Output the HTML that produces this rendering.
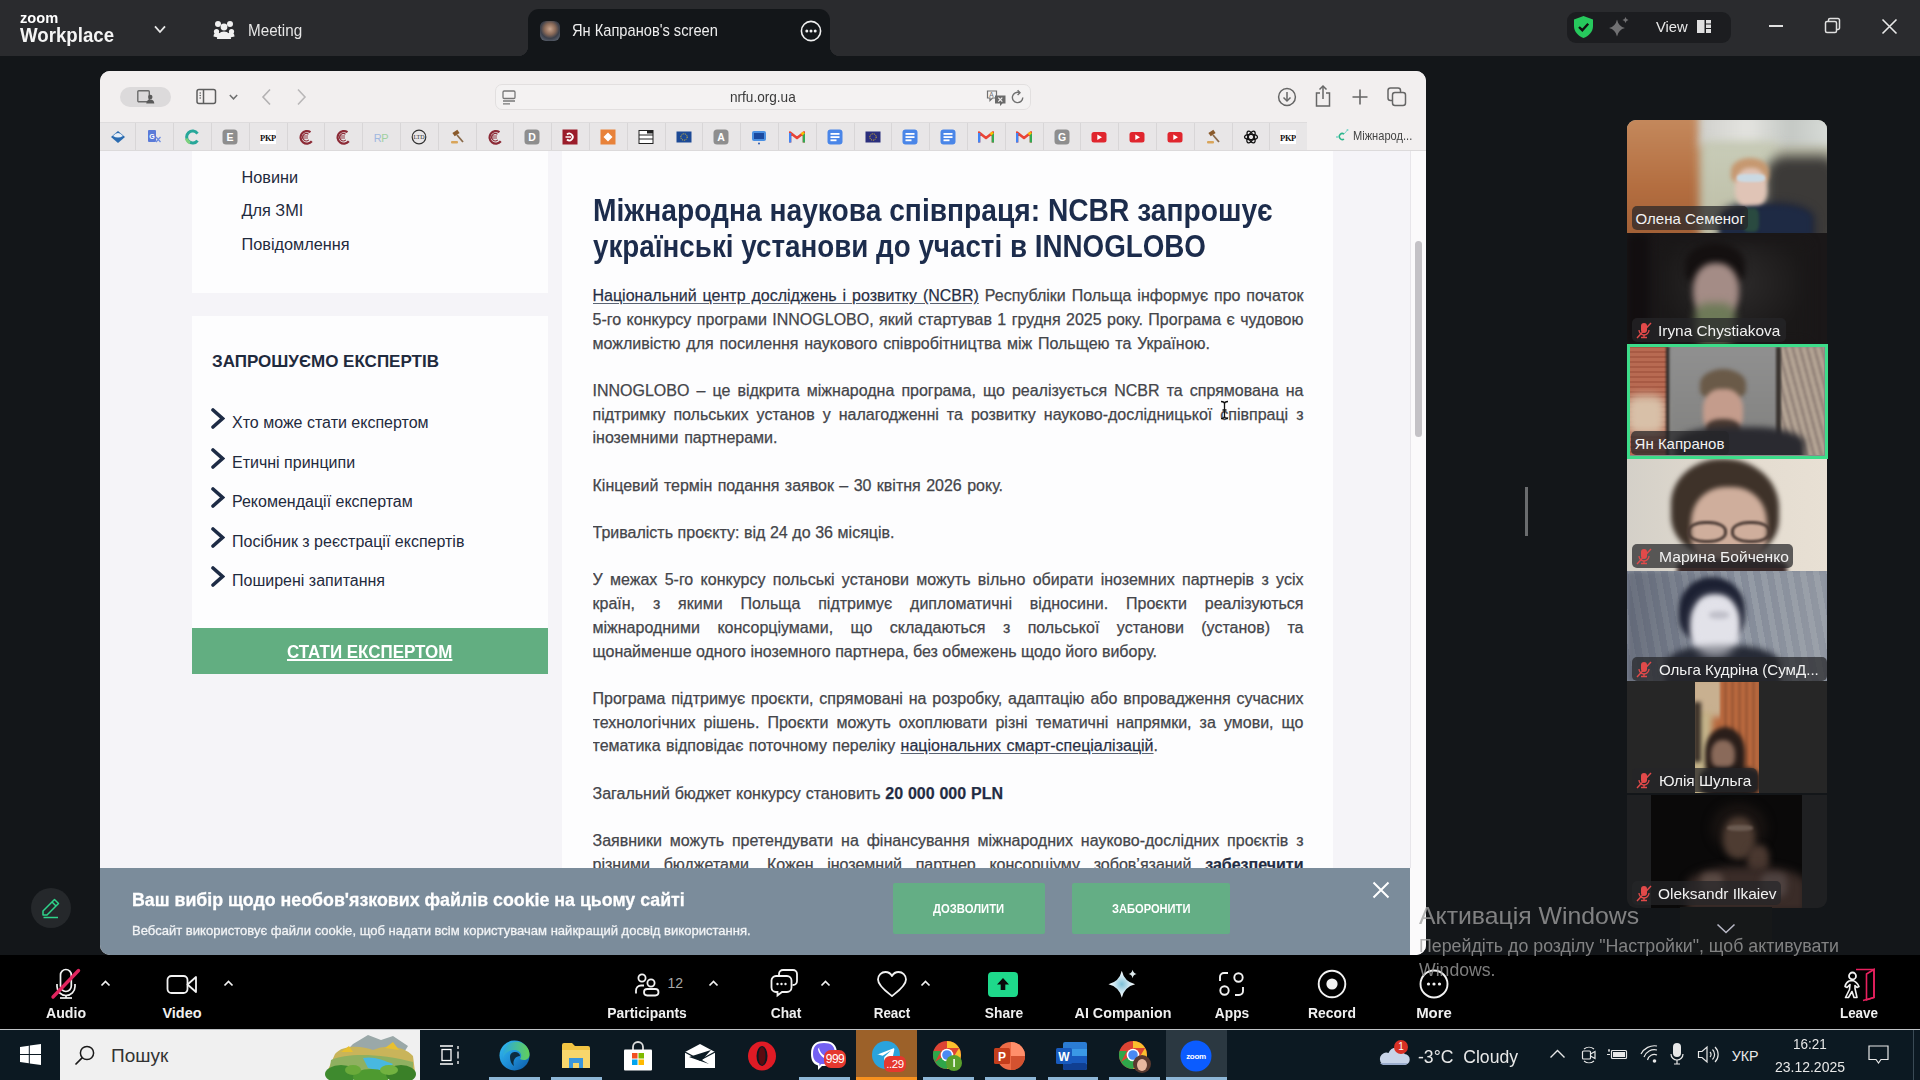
<!DOCTYPE html>
<html><head><meta charset="utf-8">
<style>
*{margin:0;padding:0;box-sizing:border-box}
html,body{width:1920px;height:1080px;overflow:hidden;background:#131619;font-family:"Liberation Sans",sans-serif}
.a{position:absolute}
#topbar{left:0;top:0;width:1920px;height:56px;background:#2a2b2e}
#tab{left:528px;top:9px;width:302px;height:47px;background:#131619;border-radius:11px 11px 0 0}
#browser{left:100px;top:71px;width:1326px;height:884px;background:#f5f4f8;border-radius:10px;overflow:hidden}
#tb{left:0;top:0;width:1326px;height:51px;background:#f2efef}
#bm{left:0;top:51px;width:1326px;height:29px;background:#f2efef;border-bottom:1px solid #dcdadb}
#page{left:0;top:80px;width:1326px;height:717px;background:#f5f4f8;overflow:hidden}
#cookie{left:0;top:797px;width:1310px;height:87px;background:#7b8c9b}
#zbar{left:0;top:955px;width:1920px;height:74px;background:#000}
#taskbar{left:0;top:1030px;width:1920px;height:50px;background:#0c1922}
.box{background:#fdfdfe}
.art{color:#44454a;font-size:16px;line-height:23.7px;-webkit-text-stroke:0.25px #44454a}
.ln{white-space:nowrap;height:23.7px}
.j{text-align:justify;text-align-last:justify;white-space:normal;width:711px;height:23.7px;overflow:hidden}
.art u{color:#1d2b45;text-decoration:underline;text-decoration-color:#5a6373;text-underline-offset:2px}
.art b{color:#1d2b45}
.side{font-size:16.3px;line-height:16.3px;color:#1f2a3d;white-space:nowrap}
.sideh{font-size:17px;line-height:17px;font-weight:bold;color:#1f2a3d;white-space:nowrap}
.items .it{position:absolute;left:0;height:20px;width:300px;font-size:16px;color:#1f2a3d;white-space:nowrap}
.items .it span{position:absolute;left:22px;top:0;line-height:16px}
.chev{position:absolute;left:0.7px;top:-7px;width:14px;height:21px}
.btnt{font-size:18.5px;line-height:18.5px;font-weight:bold;color:#fff;text-decoration:underline;white-space:nowrap}
.sx{display:inline-block;transform-origin:0 0;white-space:nowrap}
.title{font-size:31px;line-height:35.9px;font-weight:bold;color:#1c2c4c;white-space:nowrap}
.tl{height:35.9px}
#t1{transform:scaleX(0.909)}
#t2{transform:scaleX(0.896)}
.gap{height:23.7px}
.cbt{font-size:13.5px;line-height:13.5px;font-weight:bold;color:#fff;white-space:nowrap;transform-origin:0 0}
.zl{font-size:14.5px;line-height:14.5px;font-weight:bold;color:#f0f0f0;text-align:center;white-space:nowrap;transform-origin:50% 0}
.tile{overflow:hidden}
.lbl{height:24.4px;border-radius:5px;background:rgba(38,38,40,.72)}
.lt{font-size:15px;line-height:16px;color:#f2f2f2;white-space:nowrap;transform-origin:0 0}
</style></head><body>
<div id="topbar" class="a">
  <div class="a" id="zlogo" style="left:20px;top:9.8px;transform:scaleX(0.977);font-size:15px;line-height:15px;font-weight:bold;color:#fff;transform-origin:0 0">zoom</div>
  <div class="a" id="zwork" style="left:20.3px;top:25.1px;transform:scaleX(0.933);font-size:20px;line-height:20px;font-weight:bold;color:#f4f4f4;transform-origin:0 0">Workplace</div>
  <svg class="a" style="left:152px;top:23px" width="16" height="12" viewBox="0 0 16 12"><polyline points="3,3.3 8,9 13,3.3" fill="none" stroke="#e8e8e8" stroke-width="1.8"/></svg>
  <svg class="a" style="left:212px;top:18px" width="24" height="24" viewBox="0 0 24 24"><g fill="#f0f0f0"><circle cx="6" cy="6" r="3"/><circle cx="18" cy="6" r="3"/><circle cx="12" cy="9" r="3.4"/><circle cx="4.5" cy="13.5" r="2.6"/><circle cx="19.5" cy="13.5" r="2.6"/><path d="M5 21c0-4 3-7.5 7-7.5s7 3.5 7 7.5z"/><path d="M1.5 18.5c0-2.5 1.5-4 3.5-4s3 1 3 1l-2 4z"/><path d="M22.5 18.5c0-2.5-1.5-4-3.5-4s-3 1-3 1l2 4z"/></g></svg>
  <div class="a" id="zmeet" style="left:247.5px;top:21.8px;transform:scaleX(0.964);font-size:15.8px;line-height:18px;color:#e6e6e6;transform-origin:0 0">Meeting</div>
  <div class="a" style="left:1567px;top:12px;width:164px;height:31px;border-radius:9px;background:#1c1d20"></div>
  <svg class="a" style="left:1572px;top:15px" width="23" height="24" viewBox="0 0 23 24"><path d="M11.5 1 L21 4.5 V11 C21 17 16.5 21 11.5 23 C6.5 21 2 17 2 11 V4.5 Z" fill="#27c95d"/><polyline points="7,12 10.3,15.2 16.2,8.8" fill="none" stroke="#111" stroke-width="2.4"/></svg>
  <svg class="a" style="left:1608px;top:16px" width="23" height="22" viewBox="0 0 23 22"><path d="M9 3.5 Q10.5 10.5 17 12 Q10.5 13.5 9 20.5 Q7.5 13.5 1 12 Q7.5 10.5 9 3.5Z" fill="#707072"/><path d="M17.5 1 Q18 3.5 20.5 4 Q18 4.5 17.5 7 Q17 4.5 14.5 4 Q17 3.5 17.5 1Z" fill="#707072"/></svg>
  <div class="a" id="zview" style="left:1656px;top:17.5px;transform:scaleX(0.96);font-size:15.4px;line-height:18px;color:#e8e8e8;transform-origin:0 0">View</div>
  <svg class="a" style="left:1697px;top:19px" width="15" height="15" viewBox="0 0 15 15"><rect x="0" y="1" width="7.5" height="13" fill="#e0e0e0"/><rect x="9" y="1" width="5" height="3.5" fill="#e0e0e0"/><rect x="9" y="5.5" width="5" height="3.5" fill="#e0e0e0"/><rect x="9" y="10" width="5" height="4" fill="#e0e0e0"/></svg>
  <div class="a" style="left:1769px;top:25px;width:14px;height:1.6px;background:#e0e0e0"></div>
  <svg class="a" style="left:1824px;top:17px" width="18" height="18" viewBox="0 0 18 18"><rect x="1.5" y="4.5" width="11" height="11" rx="1.5" fill="none" stroke="#e0e0e0" stroke-width="1.5"/><path d="M4.5 4.5 V3 a1.5 1.5 0 0 1 1.5 -1.5 H14 a1.5 1.5 0 0 1 1.5 1.5 V11 a1.5 1.5 0 0 1 -1.5 1.5 H12.5" fill="none" stroke="#e0e0e0" stroke-width="1.5"/></svg>
  <svg class="a" style="left:1881px;top:18px" width="17" height="17" viewBox="0 0 17 17"><path d="M1.5 1.5 L15.5 15.5 M15.5 1.5 L1.5 15.5" stroke="#e8e8e8" stroke-width="1.6"/></svg>
</div>
<div id="tab" class="a">
  <div class="a" style="left:-10px;top:37px;width:10px;height:10px;background:radial-gradient(circle at 0 0,#2a2b2e 10px,#131619 10.5px)"></div>
  <div class="a" style="left:302px;top:37px;width:10px;height:10px;background:radial-gradient(circle at 100% 0,#2a2b2e 10px,#131619 10.5px)"></div>
  <div class="a" style="left:12px;top:12px;width:20px;height:20px;border-radius:6px;background:radial-gradient(circle at 50% 40%,#c9a48c 0,#8a6a58 35%,#3b3f4a 60%,#6c7480 100%)"></div>
  <div class="a" id="ztab" style="left:44px;top:13.2px;transform:scaleX(0.873);font-size:16.8px;line-height:18px;color:#eeeeee;transform-origin:0 0">Ян Капранов's screen</div>
  <svg class="a" style="left:272px;top:11px" width="22" height="22" viewBox="0 0 22 22"><circle cx="11" cy="11" r="9.6" fill="none" stroke="#f0f0f0" stroke-width="1.6"/><circle cx="6.8" cy="11" r="1.5" fill="#f0f0f0"/><circle cx="11" cy="11" r="1.5" fill="#f0f0f0"/><circle cx="15.2" cy="11" r="1.5" fill="#f0f0f0"/></svg>
</div>

<div id="browser" class="a">
  <div id="tb" class="a">
    <div class="a" style="left:20px;top:16px;width:51px;height:20px;border-radius:10px;background:#dcdadb"></div>
    <svg class="a" style="left:37px;top:18px" width="18" height="16" viewBox="0 0 18 16"><rect x="0.8" y="1.8" width="11.5" height="11" rx="1" fill="none" stroke="#6b6b6b" stroke-width="1.4"/><circle cx="13.3" cy="8" r="2.2" fill="#5a5a5a"/><path d="M9.3 14.6 c0-2.6 1.8-4 4-4 s4 1.4 4 4z" fill="#5a5a5a"/></svg>
    <svg class="a" style="left:96px;top:17px" width="21" height="17" viewBox="0 0 21 17"><rect x="1" y="1.5" width="18.5" height="14" rx="2" fill="none" stroke="#5e5e5e" stroke-width="1.5"/><line x1="7.5" y1="1.5" x2="7.5" y2="15.5" stroke="#5e5e5e" stroke-width="1.5"/><circle cx="4.2" cy="5" r=".8" fill="#5e5e5e"/><circle cx="4.2" cy="7.5" r=".8" fill="#5e5e5e"/><circle cx="4.2" cy="10" r=".8" fill="#5e5e5e"/></svg>
    <svg class="a" style="left:128px;top:22px" width="11" height="8" viewBox="0 0 11 8"><polyline points="1.8,2 5.5,5.8 9.2,2" fill="none" stroke="#707070" stroke-width="1.5"/></svg>
    <svg class="a" style="left:160px;top:17px" width="13" height="18" viewBox="0 0 13 18"><polyline points="10,1.5 3,9 10,16.5" fill="none" stroke="#b3b1b2" stroke-width="1.6"/></svg>
    <svg class="a" style="left:195px;top:17px" width="13" height="18" viewBox="0 0 13 18"><polyline points="3,1.5 10,9 3,16.5" fill="none" stroke="#b9b7b8" stroke-width="1.6"/></svg>
    <div class="a" style="left:394.5px;top:12.5px;width:536px;height:26px;border-radius:7px;background:#f4f2f2;border:1px solid #e2dfdf"></div>
    <svg class="a" style="left:402px;top:19px" width="14" height="15" viewBox="0 0 14 15"><rect x="1" y="1" width="12" height="7.5" rx="1.2" fill="none" stroke="#777" stroke-width="1.3"/><line x1="1" y1="11" x2="13" y2="11" stroke="#777" stroke-width="1.3"/><line x1="1" y1="13.8" x2="8" y2="13.8" stroke="#777" stroke-width="1.3"/></svg>
    <div class="a" id="url" style="left:630px;top:18.4px;transform:scaleX(0.906);transform-origin:0 0;font-size:15px;line-height:16px;color:#3a3a3a">nrfu.org.ua</div>
    <svg class="a" style="left:886px;top:18px" width="21" height="17" viewBox="0 0 21 17"><path d="M1.5 2 h9 v7 h-4 l-2.5 2.5 v-2.5 h-2.5z" fill="none" stroke="#707070" stroke-width="1.2"/><text x="3.2" y="8" font-size="6.5" font-family="Liberation Sans" fill="#707070">A</text><path d="M9 6.5 h10.5 v8 h-3 l-2.5 2.5 v-2.5 h-5z" fill="#6a6a6a"/><path d="M12.3 8.7 l4 4 M16.3 8.7 l-4 4" stroke="#f4f2f2" stroke-width="1.2"/></svg>
    <svg class="a" style="left:911px;top:18px" width="14" height="16" viewBox="0 0 14 16"><path d="M11.8 8.5 A5.2 5.2 0 1 1 8.5 3.6" fill="none" stroke="#707070" stroke-width="1.4"/><polyline points="6.6,1.2 9,3.7 6.6,6" fill="none" stroke="#707070" stroke-width="1.4"/></svg>
    <svg class="a" style="left:1177px;top:16px" width="20" height="20" viewBox="0 0 20 20"><circle cx="10" cy="10" r="8.4" fill="none" stroke="#666" stroke-width="1.5"/><line x1="10" y1="5" x2="10" y2="14" stroke="#666" stroke-width="1.5"/><polyline points="6.5,10.5 10,14 13.5,10.5" fill="none" stroke="#666" stroke-width="1.5"/></svg>
    <svg class="a" style="left:1214px;top:13px" width="18" height="24" viewBox="0 0 18 24"><path d="M6 9 H2.5 v13 h13 V9 H12" fill="none" stroke="#666" stroke-width="1.5"/><line x1="9" y1="2" x2="9" y2="15" stroke="#666" stroke-width="1.5"/><polyline points="5.5,5.5 9,2 12.5,5.5" fill="none" stroke="#666" stroke-width="1.5"/></svg>
    <svg class="a" style="left:1251px;top:17px" width="18" height="18" viewBox="0 0 18 18"><path d="M9 1.5 V16.5 M1.5 9 H16.5" stroke="#666" stroke-width="1.6"/></svg>
    <svg class="a" style="left:1287px;top:16px" width="20" height="20" viewBox="0 0 20 20"><rect x="1" y="1" width="12.5" height="12.5" rx="2.5" fill="none" stroke="#666" stroke-width="1.5"/><rect x="5.5" y="5.5" width="13" height="13" rx="2.5" fill="#f2efef" stroke="#666" stroke-width="1.5"/></svg>
  </div>
  <div id="bm" class="a">
<div class="a" style="left:0;top:0;width:1207.3px;height:28px;background:#e8e6e7;border-top:1px solid #dedcdd"></div>
<div class="a" style="left:35.4px;top:1px;width:1px;height:27px;background:#d8d6d7"></div>
<div class="a" style="left:73.2px;top:1px;width:1px;height:27px;background:#d8d6d7"></div>
<div class="a" style="left:111.0px;top:1px;width:1px;height:27px;background:#d8d6d7"></div>
<div class="a" style="left:148.8px;top:1px;width:1px;height:27px;background:#d8d6d7"></div>
<div class="a" style="left:186.6px;top:1px;width:1px;height:27px;background:#d8d6d7"></div>
<div class="a" style="left:224.4px;top:1px;width:1px;height:27px;background:#d8d6d7"></div>
<div class="a" style="left:262.2px;top:1px;width:1px;height:27px;background:#d8d6d7"></div>
<div class="a" style="left:300.0px;top:1px;width:1px;height:27px;background:#d8d6d7"></div>
<div class="a" style="left:337.8px;top:1px;width:1px;height:27px;background:#d8d6d7"></div>
<div class="a" style="left:375.6px;top:1px;width:1px;height:27px;background:#d8d6d7"></div>
<div class="a" style="left:413.4px;top:1px;width:1px;height:27px;background:#d8d6d7"></div>
<div class="a" style="left:451.2px;top:1px;width:1px;height:27px;background:#d8d6d7"></div>
<div class="a" style="left:489.0px;top:1px;width:1px;height:27px;background:#d8d6d7"></div>
<div class="a" style="left:526.8px;top:1px;width:1px;height:27px;background:#d8d6d7"></div>
<div class="a" style="left:564.6px;top:1px;width:1px;height:27px;background:#d8d6d7"></div>
<div class="a" style="left:602.4px;top:1px;width:1px;height:27px;background:#d8d6d7"></div>
<div class="a" style="left:640.2px;top:1px;width:1px;height:27px;background:#d8d6d7"></div>
<div class="a" style="left:678.0px;top:1px;width:1px;height:27px;background:#d8d6d7"></div>
<div class="a" style="left:715.8px;top:1px;width:1px;height:27px;background:#d8d6d7"></div>
<div class="a" style="left:753.6px;top:1px;width:1px;height:27px;background:#d8d6d7"></div>
<div class="a" style="left:791.4px;top:1px;width:1px;height:27px;background:#d8d6d7"></div>
<div class="a" style="left:829.2px;top:1px;width:1px;height:27px;background:#d8d6d7"></div>
<div class="a" style="left:867.0px;top:1px;width:1px;height:27px;background:#d8d6d7"></div>
<div class="a" style="left:904.8px;top:1px;width:1px;height:27px;background:#d8d6d7"></div>
<div class="a" style="left:942.6px;top:1px;width:1px;height:27px;background:#d8d6d7"></div>
<div class="a" style="left:980.4px;top:1px;width:1px;height:27px;background:#d8d6d7"></div>
<div class="a" style="left:1018.2px;top:1px;width:1px;height:27px;background:#d8d6d7"></div>
<div class="a" style="left:1056.0px;top:1px;width:1px;height:27px;background:#d8d6d7"></div>
<div class="a" style="left:1093.8px;top:1px;width:1px;height:27px;background:#d8d6d7"></div>
<div class="a" style="left:1131.6px;top:1px;width:1px;height:27px;background:#d8d6d7"></div>
<div class="a" style="left:1169.4px;top:1px;width:1px;height:27px;background:#d8d6d7"></div>
<svg class="a" style="left:9.7px;top:7px" width="16" height="16" viewBox="0 0 16 16"><path d="M8 2 L15 8 L8 14 L1 8z" fill="#2a6bb0"/><path d="M3 7 Q8 1 13 7 Q8 10 3 7z" fill="#e8f0f8"/></svg>
<svg class="a" style="left:46.3px;top:7px" width="16" height="16" viewBox="0 0 16 16"><rect x="2" y="1" width="8" height="12" rx="1" fill="#5b7bd8"/><text x="6" y="10" font-size="7" font-weight="bold" text-anchor="middle" font-family="Liberation Sans" fill="#fff">G</text><path d="M10 8 L14.5 13 M14.5 8 L10 13" stroke="#6b8be0" stroke-width="1.2"/></svg>
<svg class="a" style="left:84.1px;top:7px" width="16" height="16" viewBox="0 0 16 16"><path d="M13.5 4.5 A6 6 0 1 0 13.5 11.5" fill="none" stroke="#27a79a" stroke-width="3"/><path d="M2.5 9.5 A6 6 0 0 0 6 13.8" fill="none" stroke="#7dd17d" stroke-width="3"/></svg>
<svg class="a" style="left:121.9px;top:7px" width="16" height="16" viewBox="0 0 16 16"><rect x="0.5" y="0.5" width="15" height="15" rx="3.5" fill="#8e8e8e"/><text x="8" y="12.3" font-size="10.5" font-weight="bold" text-anchor="middle" font-family="Liberation Sans" fill="#fff">E</text></svg>
<svg class="a" style="left:159.7px;top:7px" width="16" height="16" viewBox="0 0 16 16"><rect x="0" y="1" width="16" height="14" fill="#fff"/><text x="8" y="11.6" font-size="8.5" font-weight="bold" text-anchor="middle" font-family="Liberation Serif" fill="#111" letter-spacing="-0.4">PKP</text></svg>
<svg class="a" style="left:197.5px;top:7px" width="16" height="16" viewBox="0 0 16 16"><path d="M12.5 3.2 A6.3 6.3 0 1 0 13.8 12.3" fill="none" stroke="#8c2a36" stroke-width="2.2"/><path d="M10.5 5.3 A3.6 3.6 0 1 0 10.8 10.8" fill="none" stroke="#8c2a36" stroke-width="1.1"/><line x1="4" y1="7" x2="10" y2="7" stroke="#8c2a36" stroke-width="0.9"/><line x1="4" y1="9" x2="10" y2="9" stroke="#8c2a36" stroke-width="0.9"/></svg>
<svg class="a" style="left:235.3px;top:7px" width="16" height="16" viewBox="0 0 16 16"><path d="M12.5 3.2 A6.3 6.3 0 1 0 13.8 12.3" fill="none" stroke="#8c2a36" stroke-width="2.2"/><path d="M10.5 5.3 A3.6 3.6 0 1 0 10.8 10.8" fill="none" stroke="#8c2a36" stroke-width="1.1"/><line x1="4" y1="7" x2="10" y2="7" stroke="#8c2a36" stroke-width="0.9"/><line x1="4" y1="9" x2="10" y2="9" stroke="#8c2a36" stroke-width="0.9"/></svg>
<svg class="a" style="left:273.1px;top:7px" width="16" height="16" viewBox="0 0 16 16"><text x="8" y="12.5" font-size="11" text-anchor="middle" font-family="Liberation Sans" fill="#9fb8e0" letter-spacing="-0.5">R<tspan fill="#a0d0a0">P</tspan></text></svg>
<svg class="a" style="left:310.9px;top:7px" width="16" height="16" viewBox="0 0 16 16"><circle cx="8" cy="8" r="6.8" fill="none" stroke="#333" stroke-width="1.2"/><text x="8" y="10.3" font-size="6" text-anchor="middle" font-family="Liberation Serif" fill="#333">LTD</text></svg>
<svg class="a" style="left:348.7px;top:7px" width="16" height="16" viewBox="0 0 16 16"><rect x="4" y="2" width="6" height="4" transform="rotate(-35 7 4)" fill="#8a5a2b"/><line x1="8" y1="6" x2="14" y2="13" stroke="#8a6a4a" stroke-width="1.8"/><rect x="2" y="12" width="7" height="2.5" rx="1" fill="#d9a55a"/></svg>
<svg class="a" style="left:386.5px;top:7px" width="16" height="16" viewBox="0 0 16 16"><path d="M12.5 3.2 A6.3 6.3 0 1 0 13.8 12.3" fill="none" stroke="#8c2a36" stroke-width="2.2"/><path d="M10.5 5.3 A3.6 3.6 0 1 0 10.8 10.8" fill="none" stroke="#8c2a36" stroke-width="1.1"/><line x1="4" y1="7" x2="10" y2="7" stroke="#8c2a36" stroke-width="0.9"/><line x1="4" y1="9" x2="10" y2="9" stroke="#8c2a36" stroke-width="0.9"/></svg>
<svg class="a" style="left:424.3px;top:7px" width="16" height="16" viewBox="0 0 16 16"><rect x="0.5" y="0.5" width="15" height="15" rx="3.5" fill="#8e8e8e"/><text x="8" y="12.3" font-size="10.5" font-weight="bold" text-anchor="middle" font-family="Liberation Sans" fill="#fff">D</text></svg>
<svg class="a" style="left:462.1px;top:7px" width="16" height="16" viewBox="0 0 16 16"><rect x="0.5" y="0.5" width="15" height="15" fill="#9b1c2a"/><path d="M5 5.5 A3.4 3.4 0 1 1 5 10.5" fill="none" stroke="#fff" stroke-width="1.8"/><line x1="3.5" y1="8" x2="9" y2="8" stroke="#fff" stroke-width="1.6"/></svg>
<svg class="a" style="left:499.9px;top:7px" width="16" height="16" viewBox="0 0 16 16"><rect x="0.5" y="0.5" width="15" height="15" fill="#e8823a"/><path d="M8 3.5 L12.5 8 L8 12.5 L3.5 8z" fill="#fff"/></svg>
<svg class="a" style="left:537.7px;top:7px" width="16" height="16" viewBox="0 0 16 16"><rect x="1" y="1.5" width="14" height="13" fill="#fff" stroke="#222" stroke-width="1"/><rect x="9" y="1.5" width="6" height="3" fill="#222"/><line x1="1" y1="6" x2="15" y2="6" stroke="#222" stroke-width="1"/><line x1="1" y1="10" x2="15" y2="10" stroke="#222" stroke-width="1"/></svg>
<svg class="a" style="left:575.5px;top:7px" width="16" height="16" viewBox="0 0 16 16"><rect x="0.5" y="2.5" width="15" height="11" fill="#1d4a96"/><circle cx="8" cy="8" r="3.2" fill="none" stroke="#ffd21f" stroke-width="0.9" stroke-dasharray="1 1"/></svg>
<svg class="a" style="left:613.3px;top:7px" width="16" height="16" viewBox="0 0 16 16"><rect x="0.5" y="0.5" width="15" height="15" rx="3.5" fill="#8e8e8e"/><text x="8" y="12.3" font-size="10.5" font-weight="bold" text-anchor="middle" font-family="Liberation Sans" fill="#fff">A</text></svg>
<svg class="a" style="left:651.1px;top:7px" width="16" height="16" viewBox="0 0 16 16"><rect x="1" y="2" width="14" height="10" rx="2" fill="#4a90e2"/><rect x="3" y="4" width="10" height="6" fill="#1a4aa0"/><circle cx="8" cy="14.5" r="1" fill="#2a5ab0"/></svg>
<svg class="a" style="left:688.9px;top:7px" width="16" height="16" viewBox="0 0 16 16"><path d="M1 13.5 V3.5 L8 9 L15 3.5 V13.5" fill="none" stroke="#ea4335" stroke-width="2.6" stroke-linejoin="round"/><path d="M1 13.5 V4" stroke="#4285f4" stroke-width="2.6"/><path d="M15 13.5 V4" stroke="#34a853" stroke-width="2.6"/><path d="M12.5 5.4 L15 3.5" stroke="#fbbc04" stroke-width="2.6"/></svg>
<svg class="a" style="left:726.7px;top:7px" width="16" height="16" viewBox="0 0 16 16"><rect x="0.5" y="0.5" width="15" height="15" rx="3" fill="#4a86e8"/><rect x="3.5" y="4" width="9" height="1.8" fill="#fff"/><rect x="3.5" y="7.2" width="9" height="1.8" fill="#fff"/><rect x="3.5" y="10.4" width="6" height="1.8" fill="#fff"/></svg>
<svg class="a" style="left:764.5px;top:7px" width="16" height="16" viewBox="0 0 16 16"><rect x="0.5" y="2.5" width="15" height="11" fill="#2b2f7d"/><circle cx="8" cy="8" r="3.2" fill="none" stroke="#ffd21f" stroke-width="0.9" stroke-dasharray="1 1"/></svg>
<svg class="a" style="left:802.3px;top:7px" width="16" height="16" viewBox="0 0 16 16"><rect x="0.5" y="0.5" width="15" height="15" rx="3" fill="#4a86e8"/><rect x="3.5" y="4" width="9" height="1.8" fill="#fff"/><rect x="3.5" y="7.2" width="9" height="1.8" fill="#fff"/><rect x="3.5" y="10.4" width="6" height="1.8" fill="#fff"/></svg>
<svg class="a" style="left:840.1px;top:7px" width="16" height="16" viewBox="0 0 16 16"><rect x="0.5" y="0.5" width="15" height="15" rx="3" fill="#4a86e8"/><rect x="3.5" y="4" width="9" height="1.8" fill="#fff"/><rect x="3.5" y="7.2" width="9" height="1.8" fill="#fff"/><rect x="3.5" y="10.4" width="6" height="1.8" fill="#fff"/></svg>
<svg class="a" style="left:877.9px;top:7px" width="16" height="16" viewBox="0 0 16 16"><path d="M1 13.5 V3.5 L8 9 L15 3.5 V13.5" fill="none" stroke="#ea4335" stroke-width="2.6" stroke-linejoin="round"/><path d="M1 13.5 V4" stroke="#4285f4" stroke-width="2.6"/><path d="M15 13.5 V4" stroke="#34a853" stroke-width="2.6"/><path d="M12.5 5.4 L15 3.5" stroke="#fbbc04" stroke-width="2.6"/></svg>
<svg class="a" style="left:915.7px;top:7px" width="16" height="16" viewBox="0 0 16 16"><path d="M1 13.5 V3.5 L8 9 L15 3.5 V13.5" fill="none" stroke="#ea4335" stroke-width="2.6" stroke-linejoin="round"/><path d="M1 13.5 V4" stroke="#4285f4" stroke-width="2.6"/><path d="M15 13.5 V4" stroke="#34a853" stroke-width="2.6"/><path d="M12.5 5.4 L15 3.5" stroke="#fbbc04" stroke-width="2.6"/></svg>
<svg class="a" style="left:953.5px;top:7px" width="16" height="16" viewBox="0 0 16 16"><rect x="0.5" y="0.5" width="15" height="15" rx="3.5" fill="#8e8e8e"/><text x="8" y="12.3" font-size="10.5" font-weight="bold" text-anchor="middle" font-family="Liberation Sans" fill="#fff">G</text></svg>
<svg class="a" style="left:991.3px;top:7px" width="16" height="16" viewBox="0 0 16 16"><rect x="0.5" y="3" width="15" height="10.5" rx="2.5" fill="#e0262e"/><path d="M6.3 5.6 L11 8.25 L6.3 10.9z" fill="#fff"/></svg>
<svg class="a" style="left:1029.1px;top:7px" width="16" height="16" viewBox="0 0 16 16"><rect x="0.5" y="3" width="15" height="10.5" rx="2.5" fill="#e0262e"/><path d="M6.3 5.6 L11 8.25 L6.3 10.9z" fill="#fff"/></svg>
<svg class="a" style="left:1066.9px;top:7px" width="16" height="16" viewBox="0 0 16 16"><rect x="0.5" y="3" width="15" height="10.5" rx="2.5" fill="#e0262e"/><path d="M6.3 5.6 L11 8.25 L6.3 10.9z" fill="#fff"/></svg>
<svg class="a" style="left:1104.7px;top:7px" width="16" height="16" viewBox="0 0 16 16"><rect x="4" y="2" width="6" height="4" transform="rotate(-35 7 4)" fill="#8a5a2b"/><line x1="8" y1="6" x2="14" y2="13" stroke="#8a6a4a" stroke-width="1.8"/><rect x="2" y="12" width="7" height="2.5" rx="1" fill="#d9a55a"/></svg>
<svg class="a" style="left:1142.5px;top:7px" width="16" height="16" viewBox="0 0 16 16"><g fill="none" stroke="#111" stroke-width="1.3"><ellipse cx="8" cy="8" rx="6.5" ry="2.7"/><ellipse cx="8" cy="8" rx="6.5" ry="2.7" transform="rotate(60 8 8)"/><ellipse cx="8" cy="8" rx="6.5" ry="2.7" transform="rotate(120 8 8)"/></g></svg>
<svg class="a" style="left:1180.3px;top:7px" width="16" height="16" viewBox="0 0 16 16"><rect x="0" y="1" width="16" height="14" fill="#fff"/><text x="8" y="11.6" font-size="8.5" font-weight="bold" text-anchor="middle" font-family="Liberation Serif" fill="#111" letter-spacing="-0.4">PKP</text></svg>
<svg class="a" style="left:1235px;top:6px" width="14" height="14" viewBox="0 0 14 14"><circle cx="2" cy="9" r="1" fill="#7bd4c8"/><path d="M9 6 A3 3 0 1 0 9 11" fill="none" stroke="#2bb58a" stroke-width="1.5"/><line x1="9" y1="6" x2="12.5" y2="2" stroke="#7bd4c8" stroke-width="1"/><circle cx="12.5" cy="2" r="1" fill="#7bd4c8"/></svg>
<div class="a" id="mizh" style="left:1252.8px;top:7px;transform:scaleX(0.853);transform-origin:0 0;font-size:13px;line-height:14px;color:#444">Міжнарод...</div>
</div>
  <div id="page" class="a">
    <div class="a box" style="left:92px;top:-20px;width:356px;height:162px"></div>
    <div class="a side" style="left:141.5px;top:17.5px">Новини</div>
    <div class="a side" style="left:141.5px;top:51px">Для ЗМІ</div>
    <div class="a side" style="left:141.5px;top:84.5px">Повідомлення</div>
    <div class="a box" style="left:92px;top:165px;width:356px;height:312px"></div>
    <div class="a sideh" style="left:112px;top:201.6px">ЗАПРОШУЄМО ЕКСПЕРТІВ</div>
    <div class="a items" style="left:110px;top:0px">
      <div class="it" style="top:264px"><svg class="chev" viewBox="0 0 14 21"><polyline points="2,2 11.5,10.5 2,19" fill="none" stroke="#1d2b45" stroke-width="3.6" stroke-linecap="round" stroke-linejoin="miter"/></svg><span>Хто може стати експертом</span></div>
      <div class="it" style="top:303.5px"><svg class="chev" viewBox="0 0 14 21"><polyline points="2,2 11.5,10.5 2,19" fill="none" stroke="#1d2b45" stroke-width="3.6" stroke-linecap="round"/></svg><span>Етичні принципи</span></div>
      <div class="it" style="top:343px"><svg class="chev" viewBox="0 0 14 21"><polyline points="2,2 11.5,10.5 2,19" fill="none" stroke="#1d2b45" stroke-width="3.6" stroke-linecap="round"/></svg><span>Рекомендації експертам</span></div>
      <div class="it" style="top:382.5px"><svg class="chev" viewBox="0 0 14 21"><polyline points="2,2 11.5,10.5 2,19" fill="none" stroke="#1d2b45" stroke-width="3.6" stroke-linecap="round"/></svg><span>Посібник з реєстрації експертів</span></div>
      <div class="it" style="top:422px"><svg class="chev" viewBox="0 0 14 21"><polyline points="2,2 11.5,10.5 2,19" fill="none" stroke="#1d2b45" stroke-width="3.6" stroke-linecap="round"/></svg><span>Поширені запитання</span></div>
    </div>
    <div class="a" style="left:92px;top:477px;width:356px;height:46px;background:#62ae81"></div>
    <div class="a btnt" style="left:187px;top:491.6px"><span class="sx" style="transform:scaleX(0.917);text-decoration:underline;text-decoration-thickness:1.5px;text-underline-offset:1px">СТАТИ ЕКСПЕРТОМ</span></div>
    <div class="a box" style="left:462px;top:-20px;width:771px;height:760px"></div>
    <div class="a title" style="left:492.8px;top:42.2px">
      <div class="tl"><span class="sx" id="t1">Міжнародна наукова співпраця: NCBR запрошує</span></div>
      <div class="tl"><span class="sx" id="t2">українські установи до участі в INNOGLOBO</span></div>
    </div>
    <div class="a art" style="left:492.5px;top:133.2px">
      <div class="j"><u>Національний центр досліджень і розвитку (NCBR)</u> Республіки Польща інформує про початок</div>
      <div class="j">5-го конкурсу програми INNOGLOBO, який стартував 1 грудня 2025 року. Програма є чудовою</div>
      <div class="j" style="width:617.5px">можливістю для посилення наукового співробітництва між Польщею та Україною.</div>
      <div class="gap"></div>
      <div class="j">INNOGLOBO – це відкрита міжнародна програма, що реалізується NCBR та спрямована на</div>
      <div class="j">підтримку польських установ у налагодженні та розвитку науково-дослідницької співпраці з</div>
      <div class="j" style="width:185px">іноземними партнерами.</div>
      <div class="gap"></div>
      <div class="j" style="width:410.5px">Кінцевий термін подання заявок – 30 квітня 2026 року.</div>
      <div class="gap"></div>
      <div class="j" style="width:302px">Тривалість проєкту: від 24 до 36 місяців.</div>
      <div class="gap"></div>
      <div class="j">У межах 5-го конкурсу польські установи можуть вільно обирати іноземних партнерів з усіх</div>
      <div class="j">країн, з якими Польща підтримує дипломатичні відносини. Проєкти реалізуються</div>
      <div class="j">міжнародними консорціумами, що складаються з польської установи (установ) та</div>
      <div class="j" style="width:564.5px">щонайменше одного іноземного партнера, без обмежень щодо його вибору.</div>
      <div class="gap"></div>
      <div class="j">Програма підтримує проєкти, спрямовані на розробку, адаптацію або впровадження сучасних</div>
      <div class="j">технологічних рішень. Проєкти можуть охоплювати різні тематичні напрямки, за умови, що</div>
      <div class="j" style="width:565.5px">тематика відповідає поточному переліку <u>національних смарт-спеціалізацій</u>.</div>
      <div class="gap"></div>
      <div class="j" style="width:410.5px">Загальний бюджет конкурсу становить <b>20 000 000 PLN</b></div>
      <div class="gap"></div>
      <div class="j">Заявники можуть претендувати на фінансування міжнародних науково-дослідних проєктів з</div>
      <div class="j">різними бюджетами. Кожен іноземний партнер консорціуму зобов’язаний <b>забезпечити</b></div>
    </div>
  </div>
  <div id="cookie" class="a">
    <div class="a" id="ck1" style="left:32.3px;top:21.5px;transform:scaleX(0.936);font-size:19px;line-height:19px;font-weight:bold;color:#fff;-webkit-text-stroke:0.3px #fff;white-space:nowrap;transform-origin:0 0">Ваш вибір щодо необов'язкових файлів cookie на цьому сайті</div>
    <div class="a" id="ck2" style="left:32.3px;top:56.2px;transform:scaleX(0.967);font-size:13.5px;line-height:13.5px;color:#f2f4f6;-webkit-text-stroke:0.3px #f2f4f6;white-space:nowrap;transform-origin:0 0">Вебсайт використовує файли cookie, щоб надати всім користувачам найкращий досвід використання.</div>
    <div class="a" style="left:792.7px;top:15px;width:152px;height:51px;background:#64ae85;border-radius:2px"></div>
    <div class="a" style="left:972px;top:15px;width:158px;height:51px;background:#64ae85;border-radius:2px"></div>
    <div class="a cbt" id="cb1" style="left:832.6px;top:34px;transform:scaleX(0.834)">ДОЗВОЛИТИ</div>
    <div class="a cbt" id="cb2" style="left:1012.3px;top:34px;transform:scaleX(0.824)">ЗАБОРОНИТИ</div>
    <svg class="a" style="left:1271.5px;top:13px" width="18" height="18" viewBox="0 0 18 18"><path d="M1.5 1.5 L16.5 16.5 M16.5 1.5 L1.5 16.5" stroke="#fff" stroke-width="2"/></svg>
  </div>
  <div class="a" style="left:1310px;top:80px;width:16px;height:804px;background:#fbfafb"></div>
  <div class="a" style="left:1310px;top:80px;width:1px;height:717px;background:#e8e6ea"></div>
  <div class="a" style="left:1314.5px;top:170px;width:7px;height:196px;border-radius:3.5px;background:#c4c2c6"></div>
</div>

<!--PANEL-->
<div class="a tile" style="left:1627px;top:120px;width:200px;height:113px;border-radius:9px 9px 0 0;background:#b8b8a4">
<div class="a" style="left:-10px;top:-10px;width:86px;height:140px;background:linear-gradient(180deg,#c68c60,#b46e40 55%,#9c5c34);border-radius:0;filter:blur(4px);"></div>
<div class="a" style="left:72px;top:-8px;width:140px;height:34px;background:linear-gradient(90deg,#d0d0cc,#e4e4e0 35%,#c4c8c4 65%,#dce0dc);border-radius:0;filter:blur(5px);"></div>
<div class="a" style="left:74px;top:22px;width:76px;height:95px;background:linear-gradient(180deg,#c8ccb8,#bcbca4);border-radius:0;filter:blur(6px);"></div>
<div class="a" style="left:138px;top:36px;width:76px;height:90px;background:#3c3a38;border-radius:25%;filter:blur(6px);"></div>
<div class="a" style="left:92px;top:82px;width:96px;height:40px;background:#22283a;border-radius:40% 40% 0 0;filter:blur(4px);"></div>
<div class="a" style="left:104px;top:38px;width:38px;height:26px;background:#c69870;border-radius:50% 50% 30% 30%;filter:blur(2px);"></div>
<div class="a" style="left:108px;top:48px;width:32px;height:40px;background:#e0c4b6;border-radius:45% 45% 42% 42%;filter:blur(2px);"></div>
<div class="a" style="left:110px;top:54px;width:28px;height:8px;background:rgba(200,220,232,.9);border-radius:30%;filter:blur(1.2px);"></div>
<div class="a" style="left:94px;top:86px;width:90px;height:30px;background:#1e2a44;border-radius:40% 40% 0 0;filter:blur(2px);"></div>
<div class="a" style="left:116px;top:88px;width:16px;height:24px;background:#2a4a40;border-radius:30%;filter:blur(1.5px);"></div>
<div class="a lbl" style="left:5px;top:85.6px;width:116px"><div class="a lt" id="lb1" style="left:3.6px;top:5px;transform:scaleX(1.0)">Олена Семеног</div></div>
</div>
<div class="a tile" style="left:1627px;top:233px;width:200px;height:111px;background:#1a1718">
<div class="a" style="left:30px;top:10px;width:150px;height:100px;background:radial-gradient(ellipse at 50% 40%,#2e2c2c,#1a1818 70%);border-radius:0;filter:blur(6px);"></div>
<div class="a" style="left:0px;top:0px;width:22px;height:111px;background:#120e10;border-radius:0;filter:blur(4px);"></div>
<div class="a" style="left:58px;top:10px;width:60px;height:42px;background:#141010;border-radius:50% 50% 30% 30%;filter:blur(3px);"></div>
<div class="a" style="left:66px;top:30px;width:46px;height:56px;background:#a48c86;border-radius:45%;filter:blur(3px);"></div>
<div class="a" style="left:68px;top:70px;width:40px;height:40px;background:#6e7a58;border-radius:30%;filter:blur(4px);"></div>
<div class="a lbl" style="left:4.5px;top:85px;width:154px"><svg class="a" style="left:3px;top:3px" width="18" height="18" viewBox="0 0 18 18"><rect x="6" y="2" width="6" height="10" rx="3" fill="#e24a4a"/><path d="M4 9 a5 5 0 0 0 10 0" fill="none" stroke="#e24a4a" stroke-width="1.3"/><path d="M9 14 V16.5 M6 16.5 H12" stroke="#e24a4a" stroke-width="1.3"/><line x1="2" y1="17" x2="16" y2="2" stroke="#e24a4a" stroke-width="1.4"/></svg><div class="a lt" id="lb2" style="left:26.5px;top:5px;transform:scaleX(1.026)">Iryna Chystiakova</div></div>
</div>
<div class="a tile" style="left:1626.5px;top:344px;width:201px;height:115px;background:#8a8a88;border:3.4px solid #3ddc8a">
<div class="a" style="left:0;top:0;width:194px;height:108px;overflow:hidden">
<div class="a" style="left:-4px;top:-4px;width:42px;height:120px;background:repeating-linear-gradient(180deg,#b86a52 0 3px,#a85a44 3px 5px);border-radius:0;filter:blur(0.6px);"></div>
<div class="a" style="left:-4px;top:48px;width:40px;height:40px;background:#d8c0a8;border-radius:30%;filter:blur(5px);"></div>
<div class="a" style="left:36px;top:0px;width:4px;height:110px;background:#2a2624;border-radius:0;filter:blur(1px);"></div>
<div class="a" style="left:40px;top:0px;width:112px;height:110px;background:linear-gradient(180deg,#909090,#80807e);border-radius:0;filter:blur(2px);"></div>
<div class="a" style="left:150px;top:0px;width:48px;height:110px;background:repeating-linear-gradient(75deg,#b4a494 0 4px,#94847a 4px 7px);border-radius:0;filter:blur(0.8px);"></div>
<div class="a" style="left:146px;top:0px;width:5px;height:110px;background:#3a3430;border-radius:0;filter:blur(1px);"></div>
<div class="a" style="left:70px;top:22px;width:46px;height:30px;background:#6a5a48;border-radius:50% 50% 30% 30%;filter:blur(2px);"></div>
<div class="a" style="left:73px;top:42px;width:40px;height:46px;background:#c49c8c;border-radius:42%;filter:blur(2px);"></div>
<div class="a" style="left:76px;top:72px;width:34px;height:22px;background:#4a3a32;border-radius:40%;filter:blur(2px);"></div>
<div class="a" style="left:45px;top:80px;width:130px;height:40px;background:#2a2a30;border-radius:40% 40% 0 0;filter:blur(3px);"></div>
<div class="a lbl" style="left:1.5px;top:83.6px;width:98px"><div class="a lt" id="lb3" style="left:3.6px;top:5px;transform:scaleX(1.0)">Ян Капранов</div></div>
</div></div>
<div class="a tile" style="left:1627px;top:459px;width:200px;height:111.5px;background:linear-gradient(90deg,#d4d0c8,#e4dcd0 60%,#e8e0d4)">
<div class="a" style="left:44px;top:0px;width:108px;height:98px;background:#3e3229;border-radius:46% 50% 38% 42%;filter:blur(2.5px);"></div>
<div class="a" style="left:64px;top:28px;width:76px;height:80px;background:#cfae9c;border-radius:44% 44% 40% 40%;filter:blur(2.5px);"></div>
<div class="a" style="left:60px;top:62px;width:40px;height:22px;background:transparent;border-radius:45%;filter:blur(0.8px);border:3px solid #4a3a34;box-sizing:border-box"></div>
<div class="a" style="left:104px;top:62px;width:40px;height:22px;background:transparent;border-radius:45%;filter:blur(0.8px);border:3px solid #4a3a34;box-sizing:border-box"></div>
<div class="a" style="left:50px;top:100px;width:110px;height:20px;background:#3a2a2a;border-radius:30%;filter:blur(2px);"></div>
<div class="a lbl" style="left:5px;top:84.5px;width:161px"><svg class="a" style="left:3px;top:3px" width="18" height="18" viewBox="0 0 18 18"><rect x="6" y="2" width="6" height="10" rx="3" fill="#e24a4a"/><path d="M4 9 a5 5 0 0 0 10 0" fill="none" stroke="#e24a4a" stroke-width="1.3"/><path d="M9 14 V16.5 M6 16.5 H12" stroke="#e24a4a" stroke-width="1.3"/><line x1="2" y1="17" x2="16" y2="2" stroke="#e24a4a" stroke-width="1.4"/></svg><div class="a lt" id="lb4" style="left:26.5px;top:5px;transform:scaleX(1.042)">Марина Бойченко</div></div>
</div>
<div class="a tile" style="left:1627px;top:570.5px;width:200px;height:110.5px;background:repeating-linear-gradient(80deg,#858c9a 0 7px,#949ba6 7px 13px)">
<div class="a" style="left:0px;top:0px;width:200px;height:111px;background:linear-gradient(90deg,rgba(70,76,92,.55),rgba(120,126,136,.05) 55%,rgba(170,174,178,.35));border-radius:0;filter:blur(2px);"></div>
<div class="a" style="left:52px;top:6px;width:66px;height:66px;background:#1c2032;border-radius:50% 50% 40% 40%;filter:blur(2.5px);"></div>
<div class="a" style="left:64px;top:24px;width:48px;height:62px;background:#dcdce4;border-radius:45% 45% 42% 42%;filter:blur(2.5px);"></div>
<div class="a" style="left:82px;top:40px;width:20px;height:8px;background:#8a8a98;border-radius:40%;filter:blur(2px);"></div>
<div class="a" style="left:38px;top:74px;width:116px;height:44px;background:#262a36;border-radius:45% 45% 0 0;filter:blur(3px);"></div>
<div class="a" style="left:64px;top:24px;width:48px;height:62px;background:rgba(230,230,236,.6);border-radius:45%;filter:blur(5px);"></div>
<div class="a lbl" style="left:5px;top:86.2px;width:195px"><svg class="a" style="left:3px;top:3px" width="18" height="18" viewBox="0 0 18 18"><rect x="6" y="2" width="6" height="10" rx="3" fill="#e24a4a"/><path d="M4 9 a5 5 0 0 0 10 0" fill="none" stroke="#e24a4a" stroke-width="1.3"/><path d="M9 14 V16.5 M6 16.5 H12" stroke="#e24a4a" stroke-width="1.3"/><line x1="2" y1="17" x2="16" y2="2" stroke="#e24a4a" stroke-width="1.4"/></svg><div class="a lt" id="lb5" style="left:26.5px;top:5px;transform:scaleX(1.006)">Ольга Кудріна (СумД...</div></div>
</div>
<div class="a tile" style="left:1627px;top:681px;width:200px;height:112px;background:#262626">
<div class="a" style="left:68px;top:1px;width:64px;height:111px;overflow:hidden;background:#b86a40">
<div class="a" style="left:-5px;top:-5px;width:40px;height:40px;background:#c8b090;border-radius:0;filter:blur(3px);"></div>
<div class="a" style="left:-5px;top:30px;width:22px;height:90px;background:#c4b48a;border-radius:0;filter:blur(3px);"></div>
<div class="a" style="left:-2px;top:20px;width:8px;height:60px;background:#3a3028;border-radius:0;filter:blur(2px);"></div>
<div class="a" style="left:25px;top:-5px;width:45px;height:90px;background:repeating-linear-gradient(90deg,#b8683e 0 4px,#a05a36 4px 7px);border-radius:0;filter:blur(1px);"></div>
<div class="a" style="left:10px;top:45px;width:40px;height:50px;background:#2a1e1a;border-radius:50% 50% 30% 30%;filter:blur(2px);"></div>
<div class="a" style="left:16px;top:58px;width:24px;height:30px;background:#8a6a5a;border-radius:45%;filter:blur(2px);"></div>
<div class="a" style="left:5px;top:85px;width:60px;height:30px;background:#1e1a1a;border-radius:30%;filter:blur(2px);"></div>
</div>
<div class="a lbl" style="left:5px;top:86.8px;width:125px"><svg class="a" style="left:3px;top:3px" width="18" height="18" viewBox="0 0 18 18"><rect x="6" y="2" width="6" height="10" rx="3" fill="#e24a4a"/><path d="M4 9 a5 5 0 0 0 10 0" fill="none" stroke="#e24a4a" stroke-width="1.3"/><path d="M9 14 V16.5 M6 16.5 H12" stroke="#e24a4a" stroke-width="1.3"/><line x1="2" y1="17" x2="16" y2="2" stroke="#e24a4a" stroke-width="1.4"/></svg><div class="a lt" id="lb6" style="left:26.5px;top:5px;transform:scaleX(1.028)">Юлія Шульга</div></div>
</div>
<div class="a tile" style="left:1627px;top:795px;width:200px;height:112.5px;background:#1f2022;border-radius:0 0 9px 9px">
<div class="a" style="left:24px;top:0;width:151px;height:112.5px;overflow:hidden;background:#0a0909">
<div class="a" style="left:60px;top:8px;width:56px;height:50px;background:#181311;border-radius:50%;filter:blur(5px);"></div>
<div class="a" style="left:72px;top:22px;width:32px;height:42px;background:#4e3c32;border-radius:45%;filter:blur(3px);"></div>
<div class="a" style="left:76px;top:30px;width:26px;height:6px;background:#6a5a50;border-radius:40%;filter:blur(1px);"></div>
<div class="a" style="left:96px;top:50px;width:22px;height:28px;background:#4a3830;border-radius:40%;filter:blur(3px);"></div>
<div class="a" style="left:36px;top:72px;width:120px;height:46px;background:#3a2c28;border-radius:40% 40% 0 0;filter:blur(4px);"></div>
<div class="a" style="left:50px;top:78px;width:22px;height:20px;background:#5a4a44;border-radius:30%;filter:blur(3px);"></div>
<div class="a" style="left:110px;top:78px;width:26px;height:24px;background:#4e4240;border-radius:30%;filter:blur(3px);"></div>
</div>
<div class="a lbl" style="left:4.7px;top:85.8px;width:149px"><svg class="a" style="left:3px;top:3px" width="18" height="18" viewBox="0 0 18 18"><rect x="6" y="2" width="6" height="10" rx="3" fill="#e24a4a"/><path d="M4 9 a5 5 0 0 0 10 0" fill="none" stroke="#e24a4a" stroke-width="1.3"/><path d="M9 14 V16.5 M6 16.5 H12" stroke="#e24a4a" stroke-width="1.3"/><line x1="2" y1="17" x2="16" y2="2" stroke="#e24a4a" stroke-width="1.4"/></svg><div class="a lt" id="lb7" style="left:26.5px;top:5px;transform:scaleX(1.03)">Oleksandr Ilkaiev</div></div>
</div>
<div class="a" style="left:1680px;top:907px;width:92px;height:48px;background:#161819"></div>
<svg class="a" style="left:1715px;top:922px" width="22" height="14" viewBox="0 0 22 14"><polyline points="2.5,2.5 11,10.5 19.5,2.5" fill="none" stroke="#b8b8c6" stroke-width="1.6"/></svg>
<div class="a" style="left:1524.5px;top:487px;width:3px;height:49px;background:#6a6c6e"></div>
<div class="a" style="left:31px;top:888px;width:40px;height:40px;border-radius:20px;background:#25282b"></div>
<svg class="a" style="left:39px;top:896px" width="24" height="24" viewBox="0 0 24 24"><path d="M15.5 3.5 L19.5 7.5 L8 19 H4 V15z" fill="none" stroke="#2fd38a" stroke-width="1.5" stroke-linejoin="round"/><line x1="13" y1="6" x2="17" y2="10" stroke="#2fd38a" stroke-width="1.5"/><line x1="4.5" y1="21.5" x2="19" y2="21.5" stroke="#2fd38a" stroke-width="1.5"/></svg>
<!--/PANEL-->
<div id="zbar" class="a">
  <svg class="a" style="left:48px;top:12px" width="36" height="46" viewBox="0 0 36 46"><rect x="12.5" y="2.5" width="10.8" height="22" rx="5.4" fill="none" stroke="#f2f2f2" stroke-width="1.7"/><path d="M9 17 v2.5 a9 9 0 0 0 18 0 V17" fill="none" stroke="#f2f2f2" stroke-width="1.7"/><line x1="18" y1="28.5" x2="18" y2="31" stroke="#f2f2f2" stroke-width="1.7"/><line x1="12" y1="31" x2="24" y2="31" stroke="#f2f2f2" stroke-width="1.7"/><line x1="5" y1="30" x2="30.5" y2="3.5" stroke="#e0245e" stroke-width="3.4" stroke-linecap="round"/></svg>
  <div class="a zl" id="zlA" style="transform:scaleX(0.976);left:-34.400000000000006px;top:51.3px;width:200px">Audio</div>
  <svg class="a" style="left:99.5px;top:25px" width="11" height="7" viewBox="0 0 11 7"><polyline points="1.5,5.5 5.5,1.5 9.5,5.5" fill="none" stroke="#f2f2f2" stroke-width="1.7"/></svg>
  <svg class="a" style="left:165px;top:19px" width="34" height="21" viewBox="0 0 34 21"><rect x="2.5" y="2" width="20" height="17" rx="4" fill="none" stroke="#f2f2f2" stroke-width="1.8"/><path d="M22.5 10.5 L31 3 V18z" fill="none" stroke="#f2f2f2" stroke-width="1.8" stroke-linejoin="round"/></svg>
  <div class="a zl" id="zlV" style="transform:scaleX(1.0);left:82px;top:51.3px;width:200px">Video</div>
  <svg class="a" style="left:222.5px;top:25px" width="11" height="7" viewBox="0 0 11 7"><polyline points="1.5,5.5 5.5,1.5 9.5,5.5" fill="none" stroke="#f2f2f2" stroke-width="1.7"/></svg>
  <svg class="a" style="left:634px;top:18px" width="26" height="24" viewBox="0 0 26 24"><circle cx="8" cy="5" r="3.6" fill="none" stroke="#f2f2f2" stroke-width="1.8"/><path d="M2 20.5 v-3 a5 5 0 0 1 5 -5 h3" fill="none" stroke="#f2f2f2" stroke-width="1.8"/><circle cx="17" cy="10" r="3.6" fill="none" stroke="#f2f2f2" stroke-width="1.8"/><rect x="10" y="16" width="14.5" height="6.5" rx="3.2" fill="none" stroke="#f2f2f2" stroke-width="1.8"/></svg>
  <div class="a" style="left:667.5px;top:21px;font-size:14px;line-height:14px;color:#a9a9a9">12</div>
  <div class="a zl" id="zlP" style="transform:scaleX(0.957);left:547.4px;top:51.3px;width:200px">Participants</div>
  <svg class="a" style="left:707.5px;top:25px" width="11" height="7" viewBox="0 0 11 7"><polyline points="1.5,5.5 5.5,1.5 9.5,5.5" fill="none" stroke="#f2f2f2" stroke-width="1.7"/></svg>
  <svg class="a" style="left:770px;top:14px" width="29" height="29" viewBox="0 0 29 29"><path d="M9 6 v-1 a4 4 0 0 1 4 -4 h10 a4 4 0 0 1 4 4 v7 a4 4 0 0 1 -4 4 h-0.5" fill="none" stroke="#f2f2f2" stroke-width="1.8"/><path d="M6 7 h11 a4.5 4.5 0 0 1 4.5 4.5 v7 a4.5 4.5 0 0 1 -4.5 4.5 h-5 l-4.5 3.5 v-3.5 h-1.5 a4.5 4.5 0 0 1 -4.5 -4.5 v-7 a4.5 4.5 0 0 1 4.5 -4.5z" fill="none" stroke="#f2f2f2" stroke-width="1.8"/><circle cx="7.5" cy="15" r="1.2" fill="#f2f2f2"/><circle cx="11.5" cy="15" r="1.2" fill="#f2f2f2"/><circle cx="15.5" cy="15" r="1.2" fill="#f2f2f2"/></svg>
  <div class="a zl" id="zlC" style="transform:scaleX(0.95);left:685.7px;top:51.3px;width:200px">Chat</div>
  <svg class="a" style="left:820px;top:25px" width="11" height="7" viewBox="0 0 11 7"><polyline points="1.5,5.5 5.5,1.5 9.5,5.5" fill="none" stroke="#f2f2f2" stroke-width="1.7"/></svg>
  <svg class="a" style="left:876px;top:15px" width="32" height="28" viewBox="0 0 32 28"><path d="M16 26 C11 22 2 16 2 9.5 C2 5 5.5 2 9.5 2 C12.5 2 14.8 3.8 16 6 C17.2 3.8 19.5 2 22.5 2 C26.5 2 30 5 30 9.5 C30 16 21 22 16 26z" fill="none" stroke="#f2f2f2" stroke-width="1.8" stroke-linejoin="round"/></svg>
  <div class="a zl" id="zlR" style="transform:scaleX(0.927);left:791.7px;top:51.3px;width:200px">React</div>
  <svg class="a" style="left:920px;top:25px" width="11" height="7" viewBox="0 0 11 7"><polyline points="1.5,5.5 5.5,1.5 9.5,5.5" fill="none" stroke="#f2f2f2" stroke-width="1.7"/></svg>
  <div class="a" style="left:988px;top:17px;width:30px;height:24.5px;border-radius:4px;background:#1ed98b"></div>
  <svg class="a" style="left:995px;top:21px" width="16" height="16" viewBox="0 0 16 16"><path d="M8 2 L14 8.5 H10.3 V14 H5.7 V8.5 H2z" fill="#0a0a0a"/></svg>
  <div class="a zl" id="zlS" style="transform:scaleX(0.953);left:903.6px;top:51.3px;width:200px">Share</div>
  <svg class="a" style="left:1107px;top:14px" width="32" height="30" viewBox="0 0 32 30"><defs><radialGradient id="ai" cx=".5" cy=".5" r=".5"><stop offset="0" stop-color="#7cc0d8"/><stop offset=".55" stop-color="#cfe8f2"/><stop offset="1" stop-color="#ffffff"/></radialGradient></defs><path d="M14.8 1.7 Q17.3 12.5 28.1 15.2 Q17.3 17.9 14.8 28.7 Q12.3 17.9 1.5 15.2 Q12.3 12.5 14.8 1.7z" fill="url(#ai)"/><path d="M25.6 0.8 Q26.3 4.4 29.6 5 Q26.3 5.6 25.6 9.2 Q24.9 5.6 21.6 5 Q24.9 4.4 25.6 0.8z" fill="#e0ecee"/></svg>
  <div class="a zl" id="zlAI" style="transform:scaleX(0.985);left:1023.4000000000001px;top:51.3px;width:200px">AI Companion</div>
  <svg class="a" style="left:1217px;top:15px" width="30" height="28" viewBox="0 0 30 28"><path d="M3 11 V7 a4 4 0 0 1 4 -4 h4" fill="none" stroke="#f2f2f2" stroke-width="1.9"/><circle cx="21.5" cy="7.5" r="4.2" fill="none" stroke="#f2f2f2" stroke-width="1.9"/><circle cx="7.5" cy="20.5" r="4.2" fill="none" stroke="#f2f2f2" stroke-width="1.9"/><path d="M18 25 h4 a4 4 0 0 0 4 -4 v-4" fill="none" stroke="#f2f2f2" stroke-width="1.9"/></svg>
  <div class="a zl" id="zlAp" style="transform:scaleX(0.946);left:1132.2px;top:51.3px;width:200px">Apps</div>
  <svg class="a" style="left:1317px;top:14px" width="30" height="30" viewBox="0 0 30 30"><circle cx="15" cy="15" r="13.3" fill="none" stroke="#f2f2f2" stroke-width="1.9"/><circle cx="15" cy="15" r="5.6" fill="#f2f2f2"/></svg>
  <div class="a zl" id="zlRe" style="transform:scaleX(0.96);left:1232px;top:51.3px;width:200px">Record</div>
  <svg class="a" style="left:1419px;top:14px" width="30" height="30" viewBox="0 0 30 30"><circle cx="15" cy="15" r="13.5" fill="none" stroke="#f2f2f2" stroke-width="1.9"/><circle cx="9.5" cy="15" r="1.6" fill="#f2f2f2"/><circle cx="15" cy="15" r="1.6" fill="#f2f2f2"/><circle cx="20.5" cy="15" r="1.6" fill="#f2f2f2"/></svg>
  <div class="a zl" id="zlM" style="transform:scaleX(1.03);left:1334px;top:51.3px;width:200px">More</div>
  <svg class="a" style="left:1843px;top:12px" width="34" height="46" viewBox="0 0 34 46"><path d="M13 2.5 H31 V30.5 L20 33.5" fill="none" stroke="#e8215f" stroke-width="1.5"/><path d="M23.5 7 L31 2.5 V30.5 L23.5 33 z" fill="none" stroke="#e8215f" stroke-width="1.6"/><circle cx="9.5" cy="9" r="3.5" fill="none" stroke="#f2f2f2" stroke-width="1.8"/><path d="M6 14 c-2 1 -3.5 3 -4 5.5 l2 1 l3 -3 l-0.5 5 l-4 8 h3 l3.5 -6 l2 6 h3 l-2 -9 v-3 l2 2 l2 -1 c-1.5 -3 -3 -5 -6 -6z" fill="none" stroke="#f2f2f2" stroke-width="1.6" stroke-linejoin="round"/></svg>
  <div class="a zl" id="zlL" style="transform:scaleX(0.929);left:1758.7px;top:51.3px;width:200px">Leave</div>
</div>
<div class="a" style="left:0;top:1029px;width:1920px;height:1px;background:#bfc3c6"></div>
<div id="taskbar" class="a">
  <svg class="a" style="left:20px;top:14px" width="21" height="21" viewBox="0 0 21 21"><g fill="#fff"><path d="M0 3 L8.8 1.8 V10 H0z"/><path d="M9.8 1.6 L21 0 V10 H9.8z"/><path d="M0 11 H8.8 V19.2 L0 18z"/><path d="M9.8 11 H21 V21 L9.8 19.4z"/></g></svg>
  <div class="a" style="left:60px;top:0;width:360px;height:50px;background:#f0f0f0"></div>
  <svg class="a" style="left:74px;top:15px" width="22" height="21" viewBox="0 0 22 21"><circle cx="13" cy="8" r="6.6" fill="none" stroke="#1a1a1a" stroke-width="1.5"/><line x1="8.3" y1="12.7" x2="1.5" y2="19.5" stroke="#1a1a1a" stroke-width="1.7"/></svg>
  <div class="a" id="poshuk" style="left:111px;top:16px;font-size:19px;line-height:19px;color:#333;transform-origin:0 0">Пошук</div>
  <svg class="a" style="left:323px;top:2px" width="94" height="48" viewBox="0 0 94 48"><path d="M30 12 L45 3 L58 8 L70 4 L85 14 L80 22 L20 22z" fill="#9aa8a8"/><path d="M12 22 C20 12 40 14 50 18 C62 12 82 14 90 24 L92 40 L4 40z" fill="#c9b45a"/><path d="M18 20 L26 14 L30 20z M62 16 L70 10 L76 18z" fill="#e8c030"/><path d="M8 28 C25 20 60 22 90 30 L90 42 L6 42z" fill="#8fb060"/><path d="M40 26 C50 24 60 28 70 32 L62 40 L45 36z" fill="#48b8e0"/><ellipse cx="18" cy="42" rx="16" ry="9" fill="#3e8a2e"/><ellipse cx="48" cy="45" rx="18" ry="8" fill="#4e9a30"/><ellipse cx="78" cy="42" rx="15" ry="9" fill="#3a8028"/><ellipse cx="30" cy="38" rx="8" ry="5" fill="#6aaa3a"/><ellipse cx="66" cy="38" rx="9" ry="5" fill="#72b240"/></svg>
  <svg class="a" style="left:439px;top:15px" width="22" height="20" viewBox="0 0 22 20"><g fill="none" stroke="#fff" stroke-width="1.3"><path d="M1 1 H14 M1 19 H14"/><rect x="3" y="4.5" width="9" height="11"/><path d="M19 1 V4 M19 6.5 V13.5 M19 16 V19"/></g></svg>
  <svg class="a" style="left:499px;top:10px" width="31" height="31" viewBox="0 0 31 31"><defs><linearGradient id="edg" x1="0" y1="0" x2="1" y2="1"><stop offset="0" stop-color="#35c1f1"/><stop offset=".5" stop-color="#1f8fd8"/><stop offset="1" stop-color="#0c59a4"/></linearGradient><linearGradient id="edg2" x1="0" y1="0" x2="1" y2="0"><stop offset="0" stop-color="#2aa8e0"/><stop offset="1" stop-color="#62d058"/></linearGradient></defs><circle cx="15.5" cy="15.5" r="15" fill="url(#edg)"/><path d="M4 12 C6 4 14 1 20 2 C26 3 31 9 30.5 15 C30 20 25 21 21 19 C24 15 21 10 15 10 C9 10 5 14 4 18z" fill="url(#edg2)"/><path d="M11 17 C11 13 14 12 16 12 C19 12 21 14 21 16 C17 16 13 20 15 26 C12 24 11 20 11 17z" fill="#0b1a23" opacity=".85"/></svg>
  <div class="a" style="left:489px;top:47px;width:51px;height:3px;background:#8db6d6"></div>
  <svg class="a" style="left:561px;top:12px" width="30" height="27" viewBox="0 0 30 27"><path d="M1 3 a2 2 0 0 1 2 -2 h8 l3 3 h13 a2 2 0 0 1 2 2 v19 H1z" fill="#f2c443"/><rect x="1" y="8" width="28" height="18" fill="#f8d66c"/><path d="M8 16 h14 v10 h-4 v-5 h-6 v5 h-4z" fill="#3a96dd"/></svg>
  <div class="a" style="left:551px;top:47px;width:51px;height:3px;background:#8db6d6"></div>
  <svg class="a" style="left:623px;top:11px" width="30" height="30" viewBox="0 0 30 30"><path d="M10 9 V6 a5 5 0 0 1 10 0 V9" fill="none" stroke="#ddd" stroke-width="1.8"/><rect x="1" y="8.5" width="28" height="21" rx="1" fill="#fff"/><rect x="9" y="12" width="5.5" height="5.5" fill="#f25022"/><rect x="15.5" y="12" width="5.5" height="5.5" fill="#7fba00"/><rect x="9" y="18.5" width="5.5" height="5.5" fill="#00a4ef"/><rect x="15.5" y="18.5" width="5.5" height="5.5" fill="#ffb900"/></svg>
  <svg class="a" style="left:685px;top:14px" width="30" height="24" viewBox="0 0 30 24"><path d="M0 8 L15 0 L30 8 V24 H0z" fill="#fff"/><path d="M0 8 L15 16 L30 8" fill="none" stroke="#0b1a23" stroke-width="1.2"/><path d="M4 13 L26 6 L17 16 L24 20z" fill="#0b1a23"/></svg>
  <svg class="a" style="left:747px;top:11px" width="30" height="30" viewBox="0 0 30 30"><ellipse cx="15" cy="15" rx="14" ry="14.5" fill="#e01b25"/><ellipse cx="15" cy="15" rx="5.5" ry="10" fill="#0b1a23"/><ellipse cx="15" cy="15" rx="3.5" ry="9" fill="#5a0a10"/></svg>
  <svg class="a" style="left:809px;top:10px" width="36" height="34" viewBox="0 0 36 34"><path d="M15 1 C24 1 28 5 28 14 C28 22 24 26 15 26 L13 26 L9 30 V25.5 C4 24 2 20 2 14 C2 5 6 1 15 1z" fill="#fff"/><path d="M15 3 C22.5 3 26 6 26 14 C26 21 22.5 24 15 24 L12 24 L10.5 26 V23.5 C6 22 4 19 4 14 C4 6 7.5 3 15 3z" fill="#7360f2"/><path d="M10 8 c1 4 3 7 8 9 l1.5-1.5 l2.5 1.5 c-1 2 -2 2.5 -3 2.5 c-5 -1 -9 -5 -10 -10 c0 -1 1 -2 2 -2.5z" fill="#fff"/></svg>
  <div class="a" style="left:824px;top:20px;width:22px;height:18px;border-radius:7px;background:#e5382e"></div>
  <div class="a" style="left:823px;top:22.5px;width:24px;font-size:12px;line-height:12px;color:#fff;text-align:center;letter-spacing:-0.5px">999</div>
  <div class="a" style="left:799px;top:47px;width:51px;height:3px;background:#8db6d6"></div>
  <div class="a" style="left:856px;top:0;width:61px;height:50px;background:#9c6129"></div>
  <div class="a" style="left:856px;top:47px;width:61px;height:3px;background:#f7911e"></div>
  <svg class="a" style="left:871px;top:10px" width="31" height="31" viewBox="0 0 31 31"><circle cx="15" cy="15" r="14" fill="#2aa3dc"/><path d="M6.5 14.5 L22 8.5 C23 8 23.5 8.5 23.3 9.8 L20.8 21.5 C20.6 22.5 20 22.7 19.2 22.2 L15 19 L13 21 L13.3 17 L20 10.5 L11.7 15.8 L8 14.7 C6.9 14.4 6.9 14.9 6.5 14.5z" fill="#fff"/></svg>
  <div class="a" style="left:884px;top:26px;width:22px;height:16px;border-radius:6px;background:#e5382e"></div>
  <div class="a" style="left:883px;top:28px;width:24px;font-size:11.5px;line-height:12px;color:#fff;text-align:center;letter-spacing:-0.4px">..29</div>
  <svg class="a" style="left:932px;top:10px" width="33" height="33" viewBox="0 0 33 33"><circle cx="15" cy="15" r="14" fill="#dd4434"/><path d="M15 1 A14 14 0 0 1 27.1 8 H15z" fill="#fbc02d"/><path d="M27.1 8 A14 14 0 0 1 15 29 L21 18z" fill="#fbc02d"/><path d="M3 22 A14 14 0 0 0 15 29 L21 18 L9 18z" fill="#2fa64a"/><path d="M1.5 11 A14 14 0 0 0 3 22 L9 11z" fill="#2fa64a"/><circle cx="15" cy="15" r="6.3" fill="#fff"/><circle cx="15" cy="15" r="4.8" fill="#4a8af4"/><circle cx="22" cy="23" r="8" fill="#5aa02c"/><rect x="21.2" y="19" width="1.8" height="8" fill="#e8f4e0"/></svg>
  <div class="a" style="left:923px;top:47px;width:51px;height:3px;background:#8db6d6"></div>
  <svg class="a" style="left:993px;top:11px" width="33" height="30" viewBox="0 0 33 30"><circle cx="18" cy="15" r="14" fill="#ed6c47"/><path d="M18 1 A14 14 0 0 1 32 15 H18z" fill="#ff8f6b"/><path d="M18 15 H32 A14 14 0 0 1 18 29z" fill="#d35230"/><rect x="1" y="7" width="16" height="16" rx="1.5" fill="#c43e1c"/><text x="9" y="19.5" font-size="12" font-weight="bold" text-anchor="middle" font-family="Liberation Sans" fill="#fff">P</text></svg>
  <div class="a" style="left:985px;top:47px;width:51px;height:3px;background:#8db6d6"></div>
  <svg class="a" style="left:1055px;top:11px" width="33" height="30" viewBox="0 0 33 30"><rect x="8" y="1" width="24" height="28" rx="2" fill="#2b7cd3"/><rect x="8" y="8" width="24" height="7" fill="#41a5ee" opacity=".7"/><rect x="8" y="15" width="24" height="7" fill="#185abd"/><rect x="8" y="22" width="24" height="7" rx="2" fill="#103f91"/><rect x="1" y="7" width="16" height="16" rx="1.5" fill="#185abd"/><text x="9" y="19.5" font-size="12" font-weight="bold" text-anchor="middle" font-family="Liberation Sans" fill="#fff">W</text></svg>
  <div class="a" style="left:1048px;top:47px;width:50px;height:3px;background:#8db6d6"></div>
  <svg class="a" style="left:1118px;top:10px" width="34" height="34" viewBox="0 0 34 34"><circle cx="15" cy="15" r="14" fill="#dd4434"/><path d="M15 1 A14 14 0 0 1 27.1 8 H15z" fill="#fbc02d"/><path d="M27.1 8 A14 14 0 0 1 15 29 L21 18z" fill="#fbc02d"/><path d="M3 22 A14 14 0 0 0 15 29 L21 18 L9 18z" fill="#2fa64a"/><path d="M1.5 11 A14 14 0 0 0 3 22 L9 11z" fill="#2fa64a"/><circle cx="15" cy="15" r="6.3" fill="#fff"/><circle cx="15" cy="15" r="4.8" fill="#4a8af4"/><circle cx="24" cy="24" r="9" fill="#5a3a30"/><ellipse cx="24" cy="25" rx="5" ry="6" fill="#e8b8a0"/></svg>
  <div class="a" style="left:1109px;top:47px;width:51px;height:3px;background:#8db6d6"></div>
  <div class="a" style="left:1166px;top:0;width:61px;height:50px;background:#2b3841"></div>
  <div class="a" style="left:1166px;top:47px;width:61px;height:3px;background:#8db6d6"></div>
  <svg class="a" style="left:1180px;top:10px" width="32" height="32" viewBox="0 0 32 32"><circle cx="16" cy="16" r="15.5" fill="#0b5cff"/><text x="16" y="18.8" font-size="8" font-weight="bold" text-anchor="middle" font-family="Liberation Sans" fill="#fff" letter-spacing="-0.3">zoom</text></svg>
  <svg class="a" style="left:1377px;top:15px" width="33" height="22" viewBox="0 0 33 22"><path d="M7 20 H27 a5.5 5.5 0 0 0 0.5 -11 a8.5 8.5 0 0 0 -16 -1 a6 6 0 0 0 -4.5 12z" fill="#c8d4e8"/><path d="M7 20 H27 a5.5 5.5 0 0 0 4 -2 H3 a6 6 0 0 0 4 2z" fill="#9aaccc"/></svg>
  <div class="a" style="left:1394px;top:9.5px;width:14px;height:14px;border-radius:7px;background:#d93025"></div>
  <div class="a" style="left:1394px;top:11.5px;width:14px;font-size:10px;line-height:10px;color:#fff;text-align:center">1</div>
  <div class="a" id="weather" style="left:1418px;transform:scaleX(0.952);top:17px;font-size:18.5px;line-height:19px;color:#e8e8e8;white-space:pre;transform-origin:0 0">-3°C  Cloudy</div>
  <svg class="a" style="left:1549px;top:19px" width="17" height="10" viewBox="0 0 17 10"><polyline points="1.5,8.5 8.5,1.5 15.5,8.5" fill="none" stroke="#e8e8e8" stroke-width="1.4"/></svg>
  <svg class="a" style="left:1581px;top:15px" width="16" height="20" viewBox="0 0 16 20"><path d="M3 4 a8 8 0 0 1 10 0 M3 16 a8 8 0 0 0 10 0" fill="none" stroke="#e8e8e8" stroke-width="1.1"/><rect x="1.5" y="6" width="8" height="8" rx="1" fill="none" stroke="#e8e8e8" stroke-width="1.2"/><path d="M9.5 9 L14 6.5 V13.5 L9.5 11" fill="none" stroke="#e8e8e8" stroke-width="1.2"/></svg>
  <svg class="a" style="left:1607px;top:18px" width="21" height="13" viewBox="0 0 21 13"><rect x="4.5" y="2.5" width="15" height="8" rx="1" fill="none" stroke="#e8e8e8" stroke-width="1.2"/><rect x="6" y="4" width="12" height="5" fill="#e8e8e8"/><path d="M0 6.5 H3 M2 3 V1 M1 3 H3" stroke="#e8e8e8" stroke-width="1.2"/></svg>
  <svg class="a" style="left:1640px;top:15px" width="18" height="19" viewBox="0 0 18 19"><g fill="none" stroke="#e8e8e8" stroke-width="1.2"><path d="M1 9 a15 15 0 0 1 16 -8"/><path d="M4 12 a11 11 0 0 1 13 -7"/><path d="M7.5 15 a7 7 0 0 1 9.5 -5"/></g><circle cx="14.5" cy="16" r="1.8" fill="#e8e8e8"/></svg>
  <svg class="a" style="left:1670px;top:12px" width="14" height="24" viewBox="0 0 14 24"><rect x="3" y="1" width="8" height="14" rx="4" fill="#e8e8e8"/><path d="M1 12 a6 6 0 0 0 12 0" fill="none" stroke="#e8e8e8" stroke-width="1.2"/><path d="M7 18 V22 M4 22 H10" stroke="#e8e8e8" stroke-width="1.2"/></svg>
  <svg class="a" style="left:1697px;top:14px" width="22" height="21" viewBox="0 0 22 21"><path d="M1.5 7.5 H5 L10 3 V18 L5 13.5 H1.5z" fill="none" stroke="#e8e8e8" stroke-width="1.2"/><path d="M13 8 a3.5 3.5 0 0 1 0 5 M15.5 5.5 a7 7 0 0 1 0 10 M18 3 a10.5 10.5 0 0 1 0 15" fill="none" stroke="#e8e8e8" stroke-width="1.2"/></svg>
  <div class="a" id="ukr" style="left:1731.7px;top:18.5px;font-size:14.3px;line-height:14.3px;color:#e8e8e8;transform-origin:0 0">УКР</div>
  <div class="a" id="clk" style="transform:scaleX(0.9);left:1757.4px;top:6.3px;width:106px;font-size:15px;line-height:15px;color:#e8e8e8;text-align:center">16:21</div>
  <div class="a" id="dt" style="transform:scaleX(0.932);left:1757.4px;top:29px;width:106px;font-size:15px;line-height:15px;color:#e8e8e8;text-align:center">23.12.2025</div>
  <svg class="a" style="left:1868px;top:15px" width="21" height="20" viewBox="0 0 21 20"><path d="M1 1 H20 V14.5 H13 L10.5 18 L8 14.5 H1z" fill="none" stroke="#e8e8e8" stroke-width="1.2"/></svg>
  <div class="a" style="left:1913px;top:0;width:1px;height:50px;background:#3a4a55"></div>
</div>
<div class="a" id="wm1" style="left:1419px;top:903.4px;transform:scaleX(1.033);font-size:24px;line-height:26px;color:rgba(160,160,160,.78);white-space:nowrap;transform-origin:0 0">Активація Windows</div>
<div class="a" id="wm2" style="left:1419px;top:936.8px;transform:scaleX(0.988);font-size:18px;line-height:18px;color:rgba(160,160,160,.78);white-space:nowrap;transform-origin:0 0">Перейдіть до розділу "Настройки", щоб активувати</div>
<div class="a" id="wm3" style="left:1419px;top:961px;transform:scaleX(0.98);font-size:18px;line-height:18px;color:rgba(160,160,160,.78);white-space:nowrap;transform-origin:0 0">Windows.</div>
<svg class="a" style="left:1219px;top:400px" width="11" height="20" viewBox="0 0 11 20"><path d="M2 1.5 Q5.5 1.5 5.5 4 V16 Q5.5 18.5 2 18.5 M9 1.5 Q5.5 1.5 5.5 4 M9 18.5 Q5.5 18.5 5.5 16 M3.5 10 H7.5" fill="none" stroke="#111" stroke-width="1.3"/></svg>
</body></html>
